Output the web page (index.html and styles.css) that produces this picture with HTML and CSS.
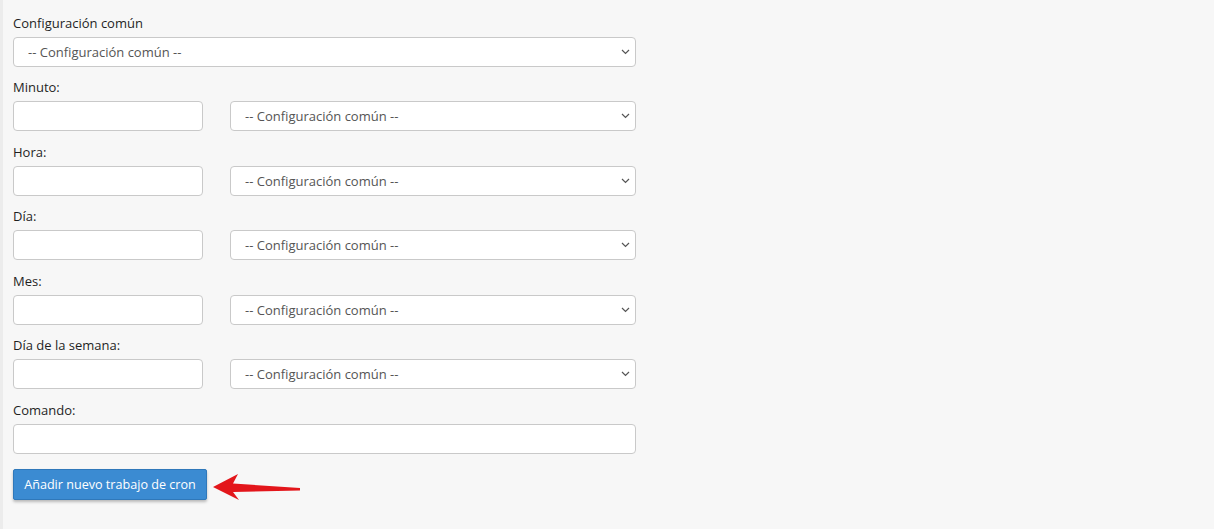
FILE: index.html
```html
<!DOCTYPE html>
<html lang="es">
<head>
<meta charset="utf-8">
<title>Cron</title>
<link rel="stylesheet" href="styles.css">
</head>
<body>
<div class="page">
  <form class="cron-form">
    <div class="group first">
      <label class="lbl">Configuración común</label>
      <div class="sel-wrap full">
        <select class="sel"><option>-- Configuración común --</option></select>
        <svg class="chev" width="9" height="6" viewBox="0 0 9 6"><path d="M1 1l3.5 3.5L8 1" fill="none" stroke="#555" stroke-width="1.2"/></svg>
      </div>
    </div>

    <div class="group">
      <label class="lbl">Minuto:</label>
      <div class="row">
        <input class="inp" type="text">
        <div class="sel-wrap">
          <select class="sel"><option>-- Configuración común --</option></select>
          <svg class="chev" width="9" height="6" viewBox="0 0 9 6"><path d="M1 1l3.5 3.5L8 1" fill="none" stroke="#555" stroke-width="1.2"/></svg>
        </div>
      </div>
    </div>

    <div class="group">
      <label class="lbl">Hora:</label>
      <div class="row">
        <input class="inp" type="text">
        <div class="sel-wrap">
          <select class="sel"><option>-- Configuración común --</option></select>
          <svg class="chev" width="9" height="6" viewBox="0 0 9 6"><path d="M1 1l3.5 3.5L8 1" fill="none" stroke="#555" stroke-width="1.2"/></svg>
        </div>
      </div>
    </div>

    <div class="group">
      <label class="lbl">Día:</label>
      <div class="row">
        <input class="inp" type="text">
        <div class="sel-wrap">
          <select class="sel"><option>-- Configuración común --</option></select>
          <svg class="chev" width="9" height="6" viewBox="0 0 9 6"><path d="M1 1l3.5 3.5L8 1" fill="none" stroke="#555" stroke-width="1.2"/></svg>
        </div>
      </div>
    </div>

    <div class="group">
      <label class="lbl">Mes:</label>
      <div class="row">
        <input class="inp" type="text">
        <div class="sel-wrap">
          <select class="sel"><option>-- Configuración común --</option></select>
          <svg class="chev" width="9" height="6" viewBox="0 0 9 6"><path d="M1 1l3.5 3.5L8 1" fill="none" stroke="#555" stroke-width="1.2"/></svg>
        </div>
      </div>
    </div>

    <div class="group">
      <label class="lbl">Día de la semana:</label>
      <div class="row">
        <input class="inp" type="text">
        <div class="sel-wrap">
          <select class="sel"><option>-- Configuración común --</option></select>
          <svg class="chev" width="9" height="6" viewBox="0 0 9 6"><path d="M1 1l3.5 3.5L8 1" fill="none" stroke="#555" stroke-width="1.2"/></svg>
        </div>
      </div>
    </div>

    <div class="group last">
      <label class="lbl">Comando:</label>
      <input class="inp wide" type="text">
    </div>

    <div class="actions">
      <button class="btn" type="button">Añadir nuevo trabajo de cron</button>
      <svg class="arrow" width="92" height="32" viewBox="0 0 92 32">
        <polygon points="2,17 27,4 22,13.5 89,18 89,20.5 22,22 28,30" fill="#e3161b"/>
      </svg>
    </div>
  </form>
</div>
</body>
</html>
```

FILE: styles.css
```css
html, body {
  margin: 0;
  padding: 0;
  height: 100%;
}
body {
  background: #f7f7f7;
  font-family: "Open Sans", "Liberation Sans", sans-serif;
  font-size: 13px;
  color: #333;
}
.page {
  min-height: 100%;
  border-left: 3px solid #ececec;
  box-sizing: border-box;
  padding: 13px 0 0 10px;
}
.cron-form {
  width: 623px;
}
.group {
  margin-bottom: 10.5px;
}
.group.first {
  margin-bottom: 10px;
}
.group.last {
  margin-bottom: 13.5px;
}
.lbl {
  display: block;
  font-weight: 400;
  line-height: 20px;
  margin-bottom: 4px;
  color: #1f1f1f;
}
.row {
  display: flex;
  gap: 27px;
}
.inp {
  box-sizing: border-box;
  width: 190px;
  height: 30px;
  border: 1px solid #c9c9c9;
  border-radius: 4px;
  background: #fff;
  margin: 0;
  padding: 4px 10px;
  font: inherit;
}
.inp.wide {
  width: 623px;
  display: block;
}
.sel-wrap {
  position: relative;
  width: 406px;
  height: 30px;
}
.sel-wrap.full {
  width: 623px;
}
.sel {
  -webkit-appearance: none;
  appearance: none;
  box-sizing: border-box;
  width: 100%;
  height: 30px;
  border: 1px solid #c9c9c9;
  border-radius: 4px;
  background: #fff;
  margin: 0;
  padding: 0 30px 0 14px;
  font-family: "Open Sans", "Liberation Sans", sans-serif;
  font-size: 13px;
  color: #555;
}
.chev {
  position: absolute;
  right: 6px;
  top: 12px;
  pointer-events: none;
}
.actions {
  display: flex;
  align-items: center;
  gap: 4px;
}
.btn {
  box-sizing: border-box;
  width: 194px;
  height: 31px;
  background: #3b8bd2;
  border: 1px solid #2f78ba;
  border-radius: 2px;
  color: #fff;
  font-family: "Open Sans", "Liberation Sans", sans-serif;
  font-size: 12.6px;
  padding: 0;
  white-space: nowrap;
  box-shadow: 0 2px 3px rgba(0,0,0,0.25);
}
.arrow {
  display: block;
  margin-top: 3px;
}
```
